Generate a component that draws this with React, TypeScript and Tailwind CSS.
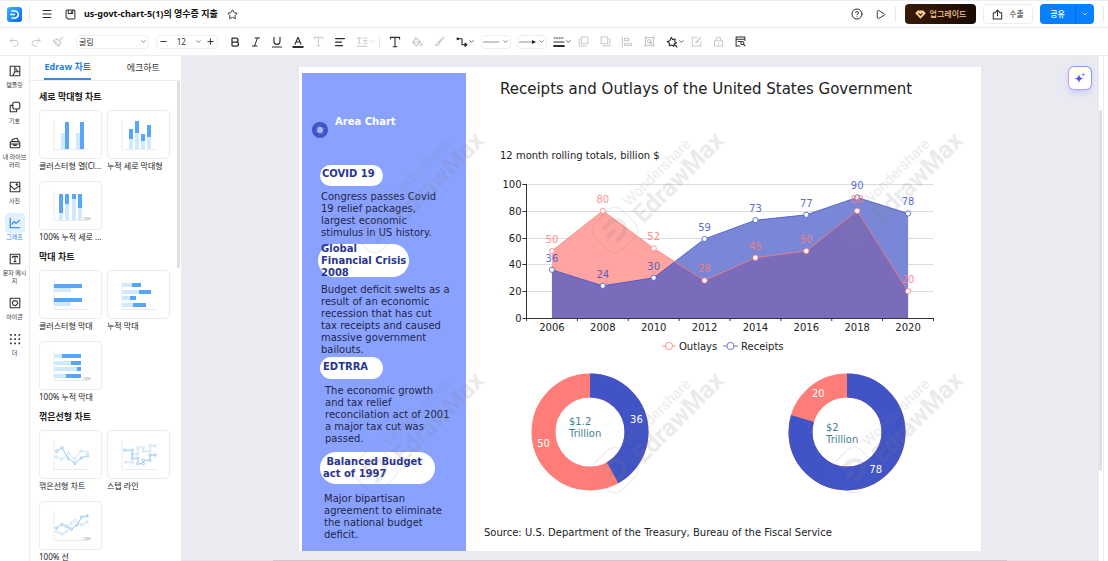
import type { ReactNode } from "react";
import {
  AlignLeft,
  Bold,
  ChevronDown,
  CircleHelp,
  Italic,
  Menu,
  Minus,
  Play,
  Plus,
  Redo2,
  Star,
  Undo2,
} from "lucide-react";
import clsx from "clsx";

const UI_FONT = "font-['Noto_Sans','Noto_Sans_CJK_KR',sans-serif]";
const DOC_FONT = "font-['DejaVu_Sans',sans-serif]";

const CORAL = "#ff7d78";
const INDIGO = "#4154c6";

/* ---------- icons ---------- */

function Icon({ children, size = 12 }: { children: ReactNode; size?: number }) {
  return (
    <svg
      width={size}
      height={size}
      viewBox="0 0 12 12"
      fill="none"
      stroke="currentColor"
      strokeWidth="1.1"
      strokeLinecap="round"
      strokeLinejoin="round"
      className="shrink-0"
    >
      {children}
    </svg>
  );
}

function Logo() {
  return (
    <svg width="15" height="15" viewBox="0 0 15 15" fill="none" className="shrink-0">
      <defs>
        <linearGradient id="logo" x1="0" y1="0" x2="1" y2="1">
          <stop offset="0" stopColor="#3fb2ff" />
          <stop offset="1" stopColor="#0a63f5" />
        </linearGradient>
      </defs>
      <rect width="15" height="15" rx="3" fill="url(#logo)" />
      <path d="M5 4h2.800a3.500 3.500 0 0 1 0 7H5" stroke="#fff" strokeWidth="1.6" strokeLinecap="round" />
      <path d="M3.800 7.500h3.400" stroke="#fff" strokeWidth="1.6" strokeLinecap="round" />
    </svg>
  );
}

const icons = {
  save: (
    <>
      <path d="M1.2 2.2a1 1 0 0 1 1-1h7.6a1 1 0 0 1 1 1v7.6a1 1 0 0 1-1 1H3.2l-2-2z" />
      <path d="M3.6 1.4V5h4.8V1.4M6.9 2.500v1.2" />
    </>
  ),
  painter: <path d="M10.8 1.2 7.6 4.2M4.8 2.6 9.200 6.8M5.2 3 1.2 5l5.2 5.4L9 6.6M3 6.8l1.4-.8M4.8 8.6 6 7.6" />,
  fontColor: (
    <>
      <path d="m3 8.2 3-7 3 7M4 6h4" />
      <path d="M1.2 11h9.6" strokeWidth="1.8" />
    </>
  ),
  underline: <path d="M3 1.2v4.200a3 3 0 0 0 6 0V1.2M1.4 11h9.2" />,
  text: <path d="M1.4 3V1.400h9.2V3M6 1.4v9.4M4.2 10.8h3.6" />,
  spacing: <path d="M1 2h4.6M3.3 2v5M2.4 7h1.8M7.6 2H11M7.6 4.6H11M7.6 7.2H11M1 10.2h10" />,
  bucket: <path d="M4 1.2l1.4 1.4M5.4 2.2 1.6 6l3.8 4 4-4zM1.8 6.2h7.4M10.4 7.6c.8 1.2.8 2 0 2s-.8-.8 0-2z" />,
  brush: <path d="M10.8 1.2 5.4 6l1 1zM5 6.6c-1.6 0-1.4 2.6-3.600 3.200 1.600 1 5 .6 4.800-2z" />,
  connector: (
    <>
      <path d="M2.2 2.8H6v6h3.6" />
      <circle cx="1.8" cy="2.8" r=".8" fill="currentColor" />
      <path d="m9 7.2 2 1.6-2 1.6z" fill="currentColor" />
    </>
  ),
  weights: (
    <>
      <path d="M1 2h1M3.6 2h1M6.2 2h1M8.8 2h1M1 6h10" />
      <path d="M1 10h10" strokeWidth="1.8" />
    </>
  ),
  front: <path d="M3.6 1.2h7.2v7.2H3.600zM1.2 3v7.800H9" />,
  back: <path d="M1.2 1.2h7.2v7.2H1.200zM10 3.600h.8v7.200H3.600V10" />,
  alignObj: <path d="M1.4 1v10M3.6 2.400h4v2.200h-4zM3.600 7.200h7v2.200h-7z" />,
  group: (
    <path d="M1 1h1.4v1.4H1zM9.600 1H11v1.400H9.600zM1 9.600h1.400V11H1zM9.600 9.600H11V11H9.600zM2.400 1.700h7.200M2.400 10.300h7.200M1.700 2.400v7.200M10.300 2.400v7.200M4 4h3v3H4zM6 7v1.400h2.400V5.600H7" />
  ),
  effects: <path d="m5.400 1.400 1.200 2.200 2.600-.6-.6 2.600 2 1.400-2.400.8-.4 2.600-2-1.400-2.600.8.400-2.600L1.200 5.600l2.600-.8zM9 9l2 2" />,
  edit: <path d="M6.400 1.400h-5v9.400h9.400V6M10.800 1.400l-5 4.800-.6 1.200 1.400-.6z" />,
  lock: <path d="M1.600 5.200h8.800v5.600H1.600zM3.600 5V3.600a2.400 2.400 0 0 1 4.800 0V5M6 7.400v1.200" />,
  find: (
    <>
      <path d="M10.800 5V1.200H1.200v9.600H5M1.200 3.600h9.600M3.400 6H6" />
      <circle cx="8" cy="7.800" r="1.700" />
      <path d="m9.400 9.200 1.600 1.600" />
    </>
  ),
  export: <path d="M3.600 4.200H1.400v6.600h9.200V4.200H8.400M6 7.400V1.200M4 3.200l2-2 2 2" />,
  template: <path d="M1.200 1.200h9.600v9.600H1.200zM5.800 1.200v5.600l-2 4M5.800 6.800h5M8.600 6.800 7 3.800" />,
  shapes: (
    <>
      <path d="M3.800 4.400H1.200v6.400h6.400V8.400" />
      <path d="M5 1.200h4.600l1.200 1.200v4.400L9.600 8H5L3.800 6.800V2.400z" />
    </>
  ),
  library: (
    <path d="M1.200 5.600a1 1 0 0 1 1-1h7.600a1 1 0 0 1 1 1v4.200a1 1 0 0 1-1 1H2.200a1 1 0 0 1-1-1zM1.200 7h9.600M4.800 7v1.400h2.400V7M2.600 4.200l1-2L8 1.200l1.600 3" />
  ),
  photo: (
    <>
      <path d="M1.200 1.200h9.600v9.600H1.200zM1.400 4.600l4 3.800 5.200-3.600" />
      <circle cx="7.800" cy="3.600" r=".7" />
    </>
  ),
  graph: <path d="M1.200 1.200v9.600h9.600M3 7.200l2-2.600 2 1.800 3.600-3" />,
  textBox: <path d="M1.200 1.200h9.600v9.600H1.200zM3.600 4.400v-1h4.800v1M6 3.400v5.200M5 8.600h2" />,
  symbol: (
    <>
      <path d="M1.200 1.200h9.600v9.600H1.200z" />
      <path d="m4.400 3.800 3.400.2 1 2.400-2 2.200-2.800-.6-.6-2.400z" />
    </>
  ),
  more: (
    <g fill="currentColor" stroke="none">
      {[1, 5.2, 9.4].map((y) =>
        [1, 5.2, 9.4].map((x) => <rect key={`${x}-${y}`} x={x} y={y} width="1.8" height="1.8" rx=".5" />),
      )}
    </g>
  ),
};

/* ---------- header ---------- */

function Header() {
  return (
    <header className="flex h-7 shrink-0 items-center border-y border-[#ececef] px-[7px] text-[#2b2b2b]">
      <Logo />
      <span className="ml-[7px] h-4 w-px bg-[#e8e8ec]" />
      <button aria-label="메뉴" className="ml-[11px]">
        <Menu size={12} strokeWidth={2} />
      </button>
      <button aria-label="저장" className="ml-[12px]">
        <Icon size={11}>{icons.save}</Icon>
      </button>
      <h1 className="ml-2 text-[9px] font-bold text-[#111]">us-govt-chart-5(1)의 영수증 지출</h1>
      <button aria-label="즐겨찾기" className="ml-[9px]">
        <Star size={11} strokeWidth={2} />
      </button>

      <div className="ml-auto flex items-center">
        <button aria-label="도움말">
          <CircleHelp size={12} strokeWidth={2} />
        </button>
        <button aria-label="재생" className="ml-[12px]">
          <Play size={11} strokeWidth={2} />
        </button>
        <span className="ml-[9px] h-4 w-px bg-[#e8e8ec]" />
        <button className="ml-[9px] flex h-5 w-[71px] items-center justify-center gap-1 rounded bg-gradient-to-r from-[#3a1a02] to-[#180b02] text-[8px] font-medium text-[#f7c79b]">
          <svg width="11" height="9" viewBox="0 0 11 9">
            <path d="M2.600.4h5.800L10.800 3.200 5.500 8.800.2 3.200z" fill="#fbc793" />
            <path d="m3.600 3.400 1.900 1.800 1.900-1.800" fill="none" stroke="#3a1a02" strokeWidth="1.1" />
          </svg>
          업그레이드
        </button>
        <button className="ml-[7px] flex h-5 w-[50px] items-center justify-center gap-[6px] rounded border border-[#ececef] text-[8px]">
          <Icon size={11}>{icons.export}</Icon>
          수출
        </button>
        <div className="ml-[7px] flex h-5 w-[54px] rounded bg-[#0780ff] text-[8px] font-medium text-white">
          <button className="flex-1">공유</button>
          <button aria-label="공유 옵션" className="flex w-[19px] items-center justify-center border-l border-[#0670e8]">
            <ChevronDown size={8} />
          </button>
        </div>
        <span className="mr-[-3px] ml-[9px] h-4 w-px bg-[#e8e8ec]" />
      </div>
    </header>
  );
}

/* ---------- toolbar ---------- */

interface ToolProps {
  label: string;
  off?: boolean;
  wide?: boolean;
  menu?: boolean;
  children: ReactNode;
}

function Tool({ label, off, wide, menu, children }: ToolProps) {
  return (
    <button
      aria-label={label}
      className={clsx(
        "flex shrink-0 items-center justify-center",
        menu ? "ml-[6px] w-[19px]" : wide ? "w-[22px]" : "w-[21px]",
        off ? "text-[#c9c9c9]" : "text-[#2b2b2b]",
      )}
    >
      {children}
      {menu && <ChevronDown size={7} strokeWidth={2.5} className="shrink-0" />}
    </button>
  );
}

function LineStyle({ label, arrow }: { label: string; arrow?: boolean }) {
  return (
    <button
      aria-label={label}
      className="ml-[6px] flex h-[14px] w-[30px] shrink-0 items-center justify-center rounded-sm border border-[#efeff2] text-[#555]"
    >
      <svg width="17" height="6" viewBox="0 0 17 6" className="shrink-0">
        <path d="M0 3h16" stroke="#777" strokeWidth=".8" />
        {arrow && <path d="M13 1l4 2-4 2z" fill="#222" />}
      </svg>
      <ChevronDown size={7} strokeWidth={2.5} className="ml-[2px] shrink-0" />
    </button>
  );
}

function Toolbar() {
  return (
    <div className="flex h-7 shrink-0 items-center border-b border-[#ececef] pl-[3px]">
      <Tool label="실행 취소" off wide>
        <Undo2 size={12} />
      </Tool>
      <Tool label="다시 실행" off wide>
        <Redo2 size={12} />
      </Tool>
      <Tool label="서식 복사" off wide>
        <Icon>{icons.painter}</Icon>
      </Tool>
      <div className="relative ml-[7px] flex items-center">
        <select
          aria-label="글꼴"
          defaultValue="굴림"
          className="h-[14px] w-[73px] appearance-none rounded-sm border border-[#efeff2] bg-white pl-[2px] text-[8px] leading-[12px] text-[#333]"
        >
          <option>굴림</option>
        </select>
        <ChevronDown size={7} strokeWidth={2.5} className="pointer-events-none absolute right-[2px] text-[#555]" />
      </div>
      <div className="ml-[7px] flex h-[14px] w-[62px] items-center justify-between rounded-sm border border-[#efeff2] px-[2px] text-[#2b2b2b]">
        <button aria-label="작게">
          <Minus size={9} strokeWidth={2.5} />
        </button>
        <input
          aria-label="글꼴 크기"
          defaultValue="12"
          className="w-[18px] text-center text-[8px] leading-[12px] text-[#333]"
        />
        <ChevronDown size={7} strokeWidth={2.5} className="text-[#555]" />
        <button aria-label="크게">
          <Plus size={9} strokeWidth={2.5} />
        </button>
      </div>
      <div className="ml-[6px] flex">
        <Tool label="굵게">
          <Bold size={12} strokeWidth={2.5} />
        </Tool>
        <Tool label="기울임꼴">
          <Italic size={12} />
        </Tool>
        <Tool label="밑줄">
          <Icon>{icons.underline}</Icon>
        </Tool>
        <Tool label="글자 색">
          <Icon>{icons.fontColor}</Icon>
        </Tool>
        <Tool label="글자 효과" off>
          <Icon size={11}>{icons.text}</Icon>
        </Tool>
        <Tool label="맞춤">
          <AlignLeft size={12} strokeWidth={2.5} />
        </Tool>
      </div>
      <Tool label="줄 간격" off menu>
        <Icon>{icons.spacing}</Icon>
      </Tool>
      <span className="mx-1 h-3 w-px shrink-0 bg-[#e8e8ec]" />
      <Tool label="텍스트" wide>
        <Icon>{icons.text}</Icon>
      </Tool>
      <Tool label="채우기" off wide>
        <Icon>{icons.bucket}</Icon>
      </Tool>
      <Tool label="선 색" off wide>
        <Icon size={11}>{icons.brush}</Icon>
      </Tool>
      <Tool label="연결선" menu>
        <Icon>{icons.connector}</Icon>
      </Tool>
      <LineStyle label="선 종류" />
      <LineStyle label="화살표" arrow />
      <Tool label="선 두께" menu>
        <Icon>{icons.weights}</Icon>
      </Tool>
      <Tool label="맨 앞으로" off wide>
        <Icon size={11}>{icons.front}</Icon>
      </Tool>
      <Tool label="맨 뒤로" off wide>
        <Icon size={11}>{icons.back}</Icon>
      </Tool>
      <Tool label="개체 맞춤" off wide>
        <Icon>{icons.alignObj}</Icon>
      </Tool>
      <Tool label="그룹" off wide>
        <Icon size={11}>{icons.group}</Icon>
      </Tool>
      <Tool label="효과" menu>
        <Icon>{icons.effects}</Icon>
      </Tool>
      <Tool label="편집" off wide>
        <Icon size={11}>{icons.edit}</Icon>
      </Tool>
      <Tool label="잠금" off wide>
        <Icon size={11}>{icons.lock}</Icon>
      </Tool>
      <Tool label="찾기" wide>
        <Icon size={11}>{icons.find}</Icon>
      </Tool>
    </div>
  );
}

/* ---------- left rail ---------- */

const railItems = [
  { label: "템플릿", icon: icons.template },
  { label: "기호", icon: icons.shapes },
  { label: "내 라이브러리", icon: icons.library },
  { label: "사진", icon: icons.photo },
  { label: "그래프", icon: icons.graph, active: true },
  { label: "문자 메시지", icon: icons.textBox },
  { label: "아이콘", icon: icons.symbol },
  { label: "더", icon: icons.more },
];

function Rail() {
  return (
    <nav className="flex w-[30px] shrink-0 flex-col items-center gap-2 border-r border-[#ececef] pt-[5px]">
      {railItems.map(({ label, icon, active }) => (
        <button key={label} className={clsx("flex flex-col items-center", active ? "text-[#1d7fe6]" : "text-[#333]")}>
          <span className={clsx("flex size-5 items-center justify-center rounded", active && "bg-[#e3f1ff]")}>
            <Icon>{icon}</Icon>
          </span>
          <span className="w-6 text-center text-[6px] leading-[8px] break-all">{label}</span>
        </button>
      ))}
    </nav>
  );
}

/* ---------- chart library ---------- */

const LIGHT = "#cfe9ff";
const DARK = "#58a6fb";

type Rect = [x: number, y: number, w: number, h: number];

interface Thumb {
  name: string;
  light?: Rect[];
  dark?: Rect[];
  lines?: [string, string];
  percent?: boolean;
}

const sections: { title: string; items: Thumb[] }[] = [
  {
    title: "세로 막대형 차트",
    items: [
      {
        name: "클러스터형 열(Cl...",
        light: [[21, 22, 4, 16], [36, 22, 4, 16]],
        dark: [[25, 11, 4, 27], [40, 11, 4, 27]],
      },
      {
        name: "누적 세로 막대형",
        light: [[21, 28, 4, 10], [27, 22, 4, 16], [33, 30, 4, 8], [39, 26, 4, 12]],
        dark: [[21, 18, 4, 10], [27, 10, 4, 12], [33, 23, 4, 7], [39, 14, 4, 12]],
      },
      {
        name: "100% 누적 세로 ...",
        light: [[19, 31, 4, 7], [25, 22, 4, 16], [32, 17, 4, 21], [38, 26, 4, 12]],
        dark: [[19, 12, 4, 19], [25, 12, 4, 10], [32, 12, 4, 5], [38, 12, 4, 14]],
        percent: true,
      },
    ],
  },
  {
    title: "막대 차트",
    items: [
      {
        name: "클러스터형 막대",
        light: [[14, 17, 17, 4], [14, 31, 17, 4]],
        dark: [[14, 13, 28, 4], [14, 27, 28, 4]],
      },
      {
        name: "누적 막대",
        light: [[14, 12, 10, 4], [14, 19, 17, 4], [14, 25, 8, 4], [14, 32, 11, 4]],
        dark: [[24, 12, 9, 4], [31, 19, 12, 4], [22, 25, 6, 4], [25, 32, 13, 4]],
      },
      {
        name: "100% 누적 막대",
        light: [[14, 12, 8, 4], [14, 19, 17, 4], [14, 25, 23, 4], [14, 32, 12, 4]],
        dark: [[22, 12, 19, 4], [31, 19, 10, 4], [37, 25, 4, 4], [26, 32, 15, 4]],
        percent: true,
      },
    ],
  },
  {
    title: "꺾은선형 차트",
    items: [
      {
        name: "꺾은선형 차트",
        lines: [
          "16.3,26 21.7,28.3 28.7,22.3 34.3,28 41.3,20 47.3,21.3",
          "16.7,20.3 22,16.7 28,27.3 35,32.3 41.3,27 47.7,24.7",
        ],
      },
      {
        name: "스텝 라인",
        lines: [
          "17.7,31.3 24.3,31.3 24.3,23 29.7,23 29.7,16.7 35.3,16.7 35.3,20.3 42,20.3 42,14.7 47,14.7",
          "16.7,19.3 24.3,19.3 24.3,27.3 29.7,27.3 29.7,32.7 35.3,32.7 35.3,29.3 42,29.3 42,24 47,24",
        ],
      },
      {
        name: "100% 선",
        lines: [
          "16.7,29.7 22,32 26.3,29.7 31,21 35.3,18.3 41.7,23 47,20",
          "16.7,26 22,22.3 26.3,24.3 31.3,27 37,23 41.7,15 47,14",
        ],
        percent: true,
      },
    ],
  },
];

function ThumbSvg({ light = [], dark = [], lines, percent }: Thumb) {
  return (
    <svg width="63" height="48" viewBox="0 0 63 48">
      <path d="M14 9.5v29h35.5" fill="none" stroke="#e6e6ea" strokeWidth=".8" />
      {light.map(([x, y, w, h]) => (
        <rect key={`${x}-${y}`} x={x} y={y} width={w} height={h} fill={LIGHT} />
      ))}
      {dark.map(([x, y, w, h]) => (
        <rect key={`${x}-${y}`} x={x} y={y} width={w} height={h} fill={DARK} />
      ))}
      {lines?.map((points, i) => (
        <g key={points} fill="#fff" stroke={i ? "#92c4ee" : "#bfe0f7"} strokeWidth=".9">
          <polyline points={points} fill="none" />
          {points.split(" ").map((p) => {
            const [cx, cy] = p.split(",");
            return <circle key={p} cx={cx} cy={cy} r="1.2" />;
          })}
        </g>
      ))}
      {percent && (
        <text x="43" y="38" fontSize="3" fill="#888">
          100%
        </text>
      )}
    </svg>
  );
}

function Library() {
  return (
    <aside className="flex w-[151px] shrink-0 flex-col">
      <div role="tablist" className="flex h-[25px] shrink-0 border-b border-[#ececef] text-[9px]">
        <button role="tab" aria-selected="true" className="flex flex-1 justify-center">
          <span className="flex h-full items-center border-b-2 border-[#2f8fea] font-bold text-[#1d7fe6]">
            Edraw 차트
          </span>
        </button>
        <button role="tab" aria-selected="false" className="flex-1 text-[#333]">
          에크하트
        </button>
      </div>
      <div className="flex min-h-0 flex-1">
        <div className="flex min-w-0 flex-1 flex-col gap-1 overflow-hidden pt-[7px] pl-[9px]">
          {sections.map(({ title, items }) => (
            <section key={title} className="shrink-0">
              <h2 className="mb-1 text-[9px] leading-[18px] font-bold text-[#222]">{title}</h2>
              <div className="grid grid-cols-[63px_63px] gap-x-[5px] gap-y-2">
                {items.map((item) => (
                  <button key={item.name} className="text-left">
                    <span className="block h-[49px] overflow-hidden rounded border border-[#ececef]">
                      <ThumbSvg {...item} />
                    </span>
                    <span className="block text-[8px] leading-[14px] whitespace-nowrap text-[#222]">{item.name}</span>
                  </button>
                ))}
              </div>
            </section>
          ))}
        </div>
        <div className="w-1 shrink-0">
          <div className="h-[39%] w-[3px] rounded-full bg-[#dedee3]" />
        </div>
      </div>
    </aside>
  );
}

/* ---------- document ---------- */

function Pill({ className, children }: { className: string; children: ReactNode }) {
  return (
    <h3 className={clsx("flex items-center rounded-full bg-white font-bold text-[#27358f]", className)}>{children}</h3>
  );
}

function Timeline() {
  return (
    <div className="w-[164px] shrink-0 bg-[#8aa2ff] px-4 pt-[43px] text-[10px] leading-[12px] text-[#1f2547]">
      <div className="-ml-[6px] flex gap-[7px]">
        <svg width="16" height="16" viewBox="0 0 16 16" className="mt-[6px]">
          <circle cx="8" cy="8" r="8" fill="#3f52c4" />
          <path d="M6.4 5h3.200L11.400 8 9.600 11H6.400L4.600 8z" fill="#a9b8fb" />
          <path
            d="M6.400 5 9.800 1.600M9.600 5l3.800 2M11.400 8l-1.200 4.600M9.600 11 6 14M6.400 11 2.600 9.200M4.600 8l1-4.800"
            stroke="#6f82e4"
            strokeWidth=".7"
          />
        </svg>
        <h2 className="font-bold text-white">Area Chart</h2>
      </div>
      <Pill className="mt-[27px] ml-[2px] h-[21px] w-[63px] pb-[3px] pl-[2px]">COVID 19</Pill>
      <p className="mt-[5px] ml-[3px] whitespace-nowrap">
        Congress passes Covid
        <br />
        19 relief packages,
        <br />
        largest economic
        <br />
        stimulus in US history.
      </p>
      <Pill className="mt-[5px] h-[33px] w-[91px] pl-[3px] whitespace-nowrap">
        Global
        <br />
        Financial Crisis
        <br />
        2008
      </Pill>
      <p className="mt-[7px] ml-[3px] whitespace-nowrap">
        Budget deficit swelts as a
        <br />
        result of an economic
        <br />
        recession that has cut
        <br />
        tax receipts and caused
        <br />
        massive government
        <br />
        bailouts.
      </p>
      <Pill className="mt-[1px] ml-[2px] h-[22px] w-[63px] pb-[3px] pl-[3px]">EDTRRA</Pill>
      <p className="mt-[6px] ml-[7px] whitespace-nowrap">
        The economic growth
        <br />
        and tax relief
        <br />
        reconcilation act of 2001
        <br />
        a major tax cut was
        <br />
        passed.
      </p>
      <Pill className="mt-[7px] ml-[2px] h-[32px] w-[115px] pl-[3px] whitespace-pre">
        {" Balanced Budget\nact of 1997"}
      </Pill>
      <p className="mt-[9px] ml-[6px] whitespace-nowrap">
        Major bipartisan
        <br />
        agreement to eliminate
        <br />
        the national budget
        <br />
        deficit.
      </p>
    </div>
  );
}

const years = [2006, 2008, 2010, 2012, 2014, 2016, 2018, 2020];
const outlays = [50, 80, 52, 28, 45, 50, 80, 20];
const receipts = [36, 24, 30, 59, 73, 77, 90, 78];

const LEFT = 60.5;
const RIGHT = 467.5;
const BASE = 152;
const STEP = (RIGHT - LEFT) / years.length;
const px = (i: number) => LEFT + STEP * (i + 0.5);
const py = (v: number) => BASE - v * 1.34;
const toLine = (data: number[]) => data.map((v, i) => `${px(i)},${py(v)}`).join(" ");
const toArea = (data: number[]) => `${px(0)},${BASE} ${toLine(data)} ${px(data.length - 1)},${BASE}`;

function Series({ data, color }: { data: number[]; color: string }) {
  return (
    <g>
      <polyline points={toLine(data)} fill="none" stroke={color} strokeWidth="1" opacity=".8" />
      {data.map((v, i) => (
        <g key={years[i]}>
          <circle cx={px(i)} cy={py(v)} r="2.6" fill="#fff" stroke={color} strokeWidth=".8" />
          <text x={px(i)} y={py(v) - 8} textAnchor="middle" fill={color} opacity=".85">
            {v}
          </text>
        </g>
      ))}
    </g>
  );
}

function AreaChart() {
  return (
    <svg width="515" height="190" viewBox="0 0 515 190" fontSize="10" className="block">
      {[0, 20, 40, 60, 80, 100].map((v) => (
        <g key={v}>
          {v > 0 && <path d={`M${LEFT} ${Math.round(py(v)) + 0.5}H${RIGHT}`} stroke="#dcdce0" />}
          <path d={`M${LEFT - 4} ${Math.round(py(v)) + 0.5}h4`} stroke="#333" />
          <text x={LEFT - 5} y={py(v) + 4} textAnchor="end" fill="#222">
            {v}
          </text>
        </g>
      ))}
      {/* white underlay keeps the grid lines out of the filled areas */}
      <polygon points={toArea(outlays)} fill="#fff" />
      <polygon points={toArea(receipts)} fill="#fff" />
      <polygon points={toArea(outlays)} fill={CORAL} opacity=".7" />
      <polygon points={toArea(receipts)} fill={INDIGO} opacity=".7" />
      <path d={`M${LEFT} 18V${BASE + 0.5}H${RIGHT}`} fill="none" stroke="#333" />
      {[...years, 0].map((_, i) => (
        <path key={i} d={`M${LEFT + STEP * i} ${BASE}v3`} stroke="#333" />
      ))}
      {years.map((year, i) => (
        <text key={year} x={px(i)} y={BASE + 13} textAnchor="middle" fill="#222">
          {year}
        </text>
      ))}
      <Series data={receipts} color={INDIGO} />
      <Series data={outlays} color={CORAL} />
      <g fill="#fff" strokeWidth=".8">
        <path d="M196 180h14" stroke={CORAL} />
        <circle cx="203" cy="180" r="3.6" stroke={CORAL} />
        <path d="M257 180h15" stroke={INDIGO} />
        <circle cx="264.5" cy="180" r="3.6" stroke={INDIGO} />
      </g>
      <text x="213" y="184" fill="#222">
        Outlays
      </text>
      <text x="275" y="184" fill="#222">
        Receipts
      </text>
    </svg>
  );
}

interface DonutProps {
  receipt: number;
  outlay: number;
  amount: string;
  textY: number;
}

function Donut({ receipt, outlay, amount, textY }: DonutProps) {
  const ring = 2 * Math.PI * 46.5;
  const share = receipt / (receipt + outlay);
  const at = (turn: number) => ({
    x: 59 + 48 * Math.sin(turn * 2 * Math.PI),
    y: 62 - 48 * Math.cos(turn * 2 * Math.PI),
  });
  return (
    <svg width="118" height="118" viewBox="0 0 118 118" fontSize="10" className="block">
      <g fill="none" strokeWidth="24" transform="rotate(-90 59 59)">
        <circle cx="59" cy="59" r="46.5" stroke={CORAL} />
        <circle cx="59" cy="59" r="46.5" stroke={INDIGO} strokeDasharray={`${ring * share} ${ring}`} />
      </g>
      <g fill="#fff" textAnchor="middle">
        <text {...at(share / 2)}>{receipt}</text>
        <text {...at((1 + share) / 2)}>{outlay}</text>
      </g>
      <text x="38" y={textY} fill="#3f7f93">
        {amount}
      </text>
      <text x="38" y={textY + 12} fill="#3f7f93">
        Trillion
      </text>
    </svg>
  );
}

function Watermarks() {
  return (
    <svg
      width="682"
      height="483"
      viewBox="0 0 682 483"
      className="pointer-events-none absolute inset-0"
      fill="#808080"
      stroke="none"
      opacity=".15"
    >
      {[163, 403].map((y) =>
        [76, 316, 555].map((x) => (
          <g key={`${x}-${y}`} transform={`translate(${x} ${y}) rotate(-45)`}>
            <rect x="-19" y="-19" width="38" height="38" rx="10" fill="none" stroke="#808080" strokeWidth="1" />
            <path
              d="M-6-9H1a9 9 0 0 1 0 18H-6M-9 0h7"
              fill="none"
              stroke="#808080"
              strokeWidth="4.5"
              strokeLinecap="round"
            />
            <text x="26" y="-6" fontSize="15" className="font-['Roboto',sans-serif]">
              Wondershare
            </text>
            <text x="24" y="16" fontSize="25" fontWeight="700" className="font-['Roboto',sans-serif]">
              EdrawMax
            </text>
          </g>
        )),
      )}
    </svg>
  );
}

function DocumentPage() {
  return (
    <article className={clsx("relative flex w-[682px] shrink-0 bg-white pt-[6px] pl-[3px] text-[#222]", DOC_FONT)}>
      <Timeline />
      <div className="flex min-w-0 flex-1 flex-col pt-[6px]">
        <h1 className="ml-[34px] text-[15px] leading-5">Receipts and Outlays of the United States Government</h1>
        <p className="mt-[51px] ml-[34px] text-[10px] leading-[12px]">12 month rolling totals, billion $</p>
        <div className="mt-1">
          <AreaChart />
        </div>
        <div className="mt-[17px] ml-[65px] flex gap-[139px]">
          <Donut receipt={36} outlay={50} amount="$1.2" textY={52} />
          <Donut receipt={78} outlay={20} amount="$2" textY={58} />
        </div>
        <p className="mt-9 mb-[12px] ml-[18px] text-[10px] leading-[12px]">
          Source: U.S. Department of the Treasury, Bureau of the Fiscal Service
        </p>
      </div>
      <Watermarks />
    </article>
  );
}

function AiButton() {
  return (
    <button
      aria-label="AI"
      className="absolute top-[10px] right-[7px] size-6 rounded-md bg-gradient-to-tr from-[#e59af0] to-[#6d8ff5] p-px shadow-md shadow-indigo-200"
    >
      <span className="flex size-full items-center justify-center rounded-[5px] bg-white">
        <svg width="12" height="12" viewBox="0 0 12 12">
          <path
            d="M5 2c.5 3 1.400 3.900 4.600 4.600C6.400 7.300 5.500 8.200 5 11.400 4.500 8.200 3.600 7.300.4 6.600 3.600 5.900 4.500 5 5 2z"
            fill="#5a4df0"
          />
          <path d="M9.400.4c.2 1.300.6 1.700 2 2-1.400.3-1.800.7-2 2-.2-1.300-.6-1.700-2-2 1.400-.3 1.800-.7 2-2z" fill="#3f8df5" />
        </svg>
      </span>
    </button>
  );
}

export default function App() {
  return (
    <div className={clsx("flex h-screen flex-col overflow-hidden bg-white", UI_FONT)}>
      <Header />
      <Toolbar />
      <div className="flex min-h-0 flex-1">
        <Rail />
        <Library />
        <main className="relative flex min-w-0 flex-1 flex-col bg-[#eaeaf1]">
          <div className="flex min-h-0 flex-1 items-start justify-center overflow-hidden pt-[11px]">
            <DocumentPage />
          </div>
          <div className="h-px shrink-0 bg-[#e4e4e8]">
            <div className="mx-auto h-px w-4/5 bg-[#c9c9cf]" />
          </div>
          <AiButton />
        </main>
        <div className="flex w-1 shrink-0 flex-col pt-[54px]">
          <div className="h-4/5 w-[3px] rounded-full bg-[#dedee3]" />
        </div>
        <div className="w-[5px] shrink-0 border-l border-[#ececef]" />
      </div>
    </div>
  );
}
